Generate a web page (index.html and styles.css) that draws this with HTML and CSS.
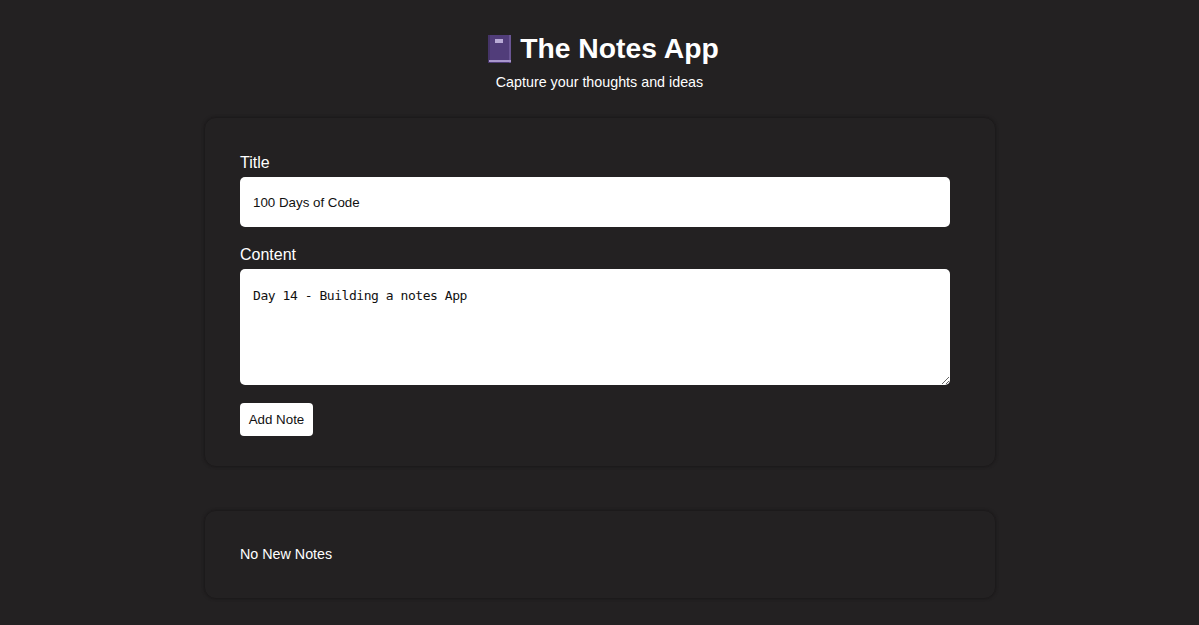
FILE: index.html
```html
<!DOCTYPE html>
<html lang="en">
<head>
    <meta charset="UTF-8">
    <meta name="viewport" content="width=device-width, initial-scale=1.0">
    <title>The Notes App</title>
    <link rel="stylesheet" href="styles.css">
</head>
<body>
    <header class="cabecera">
        <h1>
            <svg class="libro" viewBox="0 0 33 28" width="33" height="28" aria-hidden="true">
                <rect x="8" y="0" width="23" height="28" rx="2" fill="#513d7a"/>
                <rect x="8" y="0" width="2" height="28" fill="#453468"/>
                <rect x="29" y="0" width="2" height="28" fill="#6a5594"/>
                <rect x="9" y="25" width="22" height="2" fill="#a896cc"/>
                <rect x="15" y="4" width="8" height="4" fill="#b9abd6"/>
            </svg>
            The Notes App
        </h1>
        <p>Capture your thoughts and ideas</p>
    </header>

    <main class="contenido">
        <!-- Formulario -->
        <form class="tarjeta formulario">
            <label for="titulo">Title</label>
            <input id="titulo" type="text" value="100 Days of Code">
            <label for="texto">Content</label>
            <textarea id="texto">Day 14 - Building a notes App</textarea>
            <button type="button">Add Note</button>
        </form>

        <!-- Lista de notas -->
        <section class="tarjeta notas">
            <p>No New Notes</p>
        </section>
    </main>
</body>
</html>
```

FILE: styles.css
```css
* {
    box-sizing: border-box;
    margin: 0;
    padding: 0;
    font-family: "Liberation Sans", Arial, sans-serif;
}

body {
    height: 625px;
    overflow: hidden;
    background-color: #232122;
    color: #fff;
}

.cabecera {
    padding-top: 32px;
    text-align: center;
}

.cabecera h1 {
    display: flex;
    align-items: center;
    justify-content: center;
    gap: 7px;
    height: 33px;
    font-size: 28.3px;
    line-height: 33px;
}

.cabecera p {
    margin-top: 9px;
    font-size: 14.3px;
    line-height: 17px;
}

.contenido {
    display: flex;
    flex-direction: column;
    gap: 43px;
    width: 792px;
    margin: 26px auto 0 204px;
}

.tarjeta {
    border: 1px solid #1c1a1b;
    border-radius: 12px;
    box-shadow: 0 0 3px #191718;
    padding: 0 45px 0 35px;
}

.formulario {
    display: flex;
    flex-direction: column;
    align-items: flex-start;
    height: 350px;
    padding-top: 35px;
}

.formulario label {
    font-size: 16px;
    line-height: 20px;
    margin-bottom: 4px;
}

.formulario input {
    width: 100%;
    height: 50px;
    margin-bottom: 18px;
    padding: 0 13px;
    border: none;
    border-radius: 5px;
    background: #fff;
    color: #111;
    font-size: 13.33px;
}

.formulario textarea {
    display: block;
    width: 100%;
    height: 116px;
    margin-bottom: 18px;
    padding: 19px 13px;
    border: none;
    border-radius: 5px;
    background: #fff;
    color: #111;
    font-family: "DejaVu Sans Mono", monospace;
    font-size: 13px;
    letter-spacing: -0.45px;
    line-height: 15px;
}

.formulario button {
    width: 73px;
    height: 33px;
    border: none;
    border-radius: 4px;
    background: #fff;
    color: #111;
    font-size: 13.33px;
}

.notas {
    height: 89px;
    display: flex;
    align-items: center;
    padding-bottom: 2px;
}

.notas p {
    font-size: 14.3px;
}
```
